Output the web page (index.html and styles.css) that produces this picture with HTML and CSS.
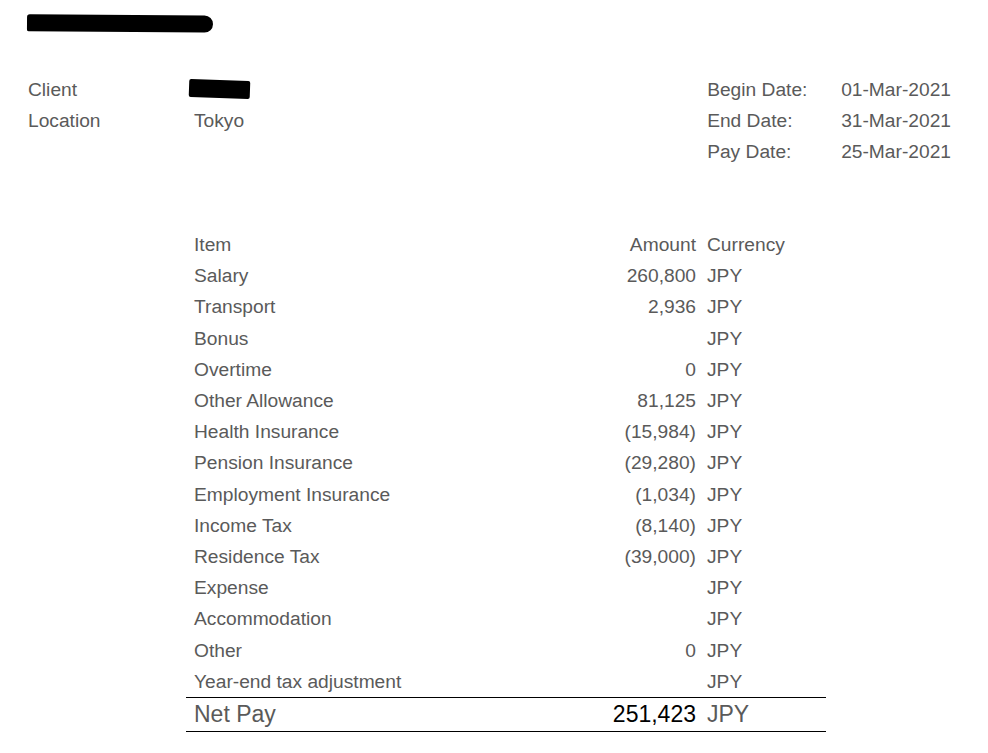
FILE: index.html
```html
<!DOCTYPE html>
<html lang="en">
<head>
    <meta charset="UTF-8">
    <title>Payslip</title>
    <link rel="stylesheet" href="styles.css">
</head>
<body>
    <div class="page">
        <!-- redacted name -->
        <div class="title"><span class="redact redact-title"></span></div>

        <div class="info">
            <div class="info-left">
                <div class="info-label">Client</div>
                <div class="info-value"><span class="redact redact-client"></span></div>
                <div class="info-label">Location</div>
                <div class="info-value">Tokyo</div>
            </div>
            <div class="info-right">
                <div class="info-label">Begin Date:</div>
                <div class="info-value">01-Mar-2021</div>
                <div class="info-label">End Date:</div>
                <div class="info-value">31-Mar-2021</div>
                <div class="info-label">Pay Date:</div>
                <div class="info-value">25-Mar-2021</div>
            </div>
        </div>

        <table class="pay-table">
            <thead>
                <tr><th class="item">Item</th><th class="amount">Amount</th><th class="currency">Currency</th></tr>
            </thead>
            <tbody>
                <tr><td class="item">Salary</td><td class="amount">260,800</td><td class="currency">JPY</td></tr>
                <tr><td class="item">Transport</td><td class="amount">2,936</td><td class="currency">JPY</td></tr>
                <tr><td class="item">Bonus</td><td class="amount"></td><td class="currency">JPY</td></tr>
                <tr><td class="item">Overtime</td><td class="amount">0</td><td class="currency">JPY</td></tr>
                <tr><td class="item">Other Allowance</td><td class="amount">81,125</td><td class="currency">JPY</td></tr>
                <tr><td class="item">Health Insurance</td><td class="amount">(15,984)</td><td class="currency">JPY</td></tr>
                <tr><td class="item">Pension Insurance</td><td class="amount">(29,280)</td><td class="currency">JPY</td></tr>
                <tr><td class="item">Employment Insurance</td><td class="amount">(1,034)</td><td class="currency">JPY</td></tr>
                <tr><td class="item">Income Tax</td><td class="amount">(8,140)</td><td class="currency">JPY</td></tr>
                <tr><td class="item">Residence Tax</td><td class="amount">(39,000)</td><td class="currency">JPY</td></tr>
                <tr><td class="item">Expense</td><td class="amount"></td><td class="currency">JPY</td></tr>
                <tr><td class="item">Accommodation</td><td class="amount"></td><td class="currency">JPY</td></tr>
                <tr><td class="item">Other</td><td class="amount">0</td><td class="currency">JPY</td></tr>
                <tr><td class="item">Year-end tax adjustment</td><td class="amount"></td><td class="currency">JPY</td></tr>
            </tbody>
            <tfoot>
                <tr class="net"><td class="item">Net Pay</td><td class="amount">251,423</td><td class="currency">JPY</td></tr>
            </tfoot>
        </table>
    </div>
</body>
</html>
```

FILE: styles.css
```css
body {
    margin: 0;
    padding: 0;
    background-color: #fff;
    font-family: "Liberation Sans", Arial, sans-serif;
    font-size: 19.2px;
    color: #5a5a5a;
}

.page {
    width: 988px;
}

/* Redaction marks */
.redact {
    display: inline-block;
    background-color: #000;
}

.title {
    height: 36px;
    padding: 15px 0 0 27px;
}

.redact-title {
    width: 186px;
    height: 17px;
    border-radius: 3px 9px 9px 2px;
    transform: rotate(0.4deg);
}

.redact-client {
    width: 61px;
    height: 18px;
    margin-top: 6px;
    margin-left: -5px;
    border-radius: 2px;
    transform: rotate(2deg);
    vertical-align: top;
}

/* Header info */
.info {
    display: flex;
    justify-content: space-between;
    padding-top: 23px;
    height: 155px;
}

.info-left {
    display: grid;
    grid-template-columns: 166px auto;
    grid-auto-rows: 31px;
    align-content: start;
    padding-left: 28px;
}

.info-right {
    display: grid;
    grid-template-columns: 134px auto;
    grid-auto-rows: 31px;
    align-content: start;
    padding-right: 37px;
}

.info-label,
.info-value {
    line-height: 31px;
    white-space: nowrap;
}

/* Pay table */
.pay-table {
    margin-left: 186px;
    width: 640px;
    border-collapse: collapse;
}

.pay-table th,
.pay-table td {
    font-weight: normal;
    height: 31.2px;
    padding: 0;
    line-height: 31.2px;
    white-space: nowrap;
}

.pay-table .item {
    text-align: left;
    padding-left: 8px;
}

.pay-table .amount {
    text-align: right;
    width: 120px;
    padding-right: 11px;
}

.pay-table .currency {
    text-align: left;
    width: 119px;
}

.pay-table tbody tr:last-child td {
    border-bottom: 1px solid #000;
}

.net td {
    font-size: 23px;
    height: 33px;
    line-height: 33px;
    border-bottom: 1px solid #000;
}

.net .amount {
    color: #000;
}
```
